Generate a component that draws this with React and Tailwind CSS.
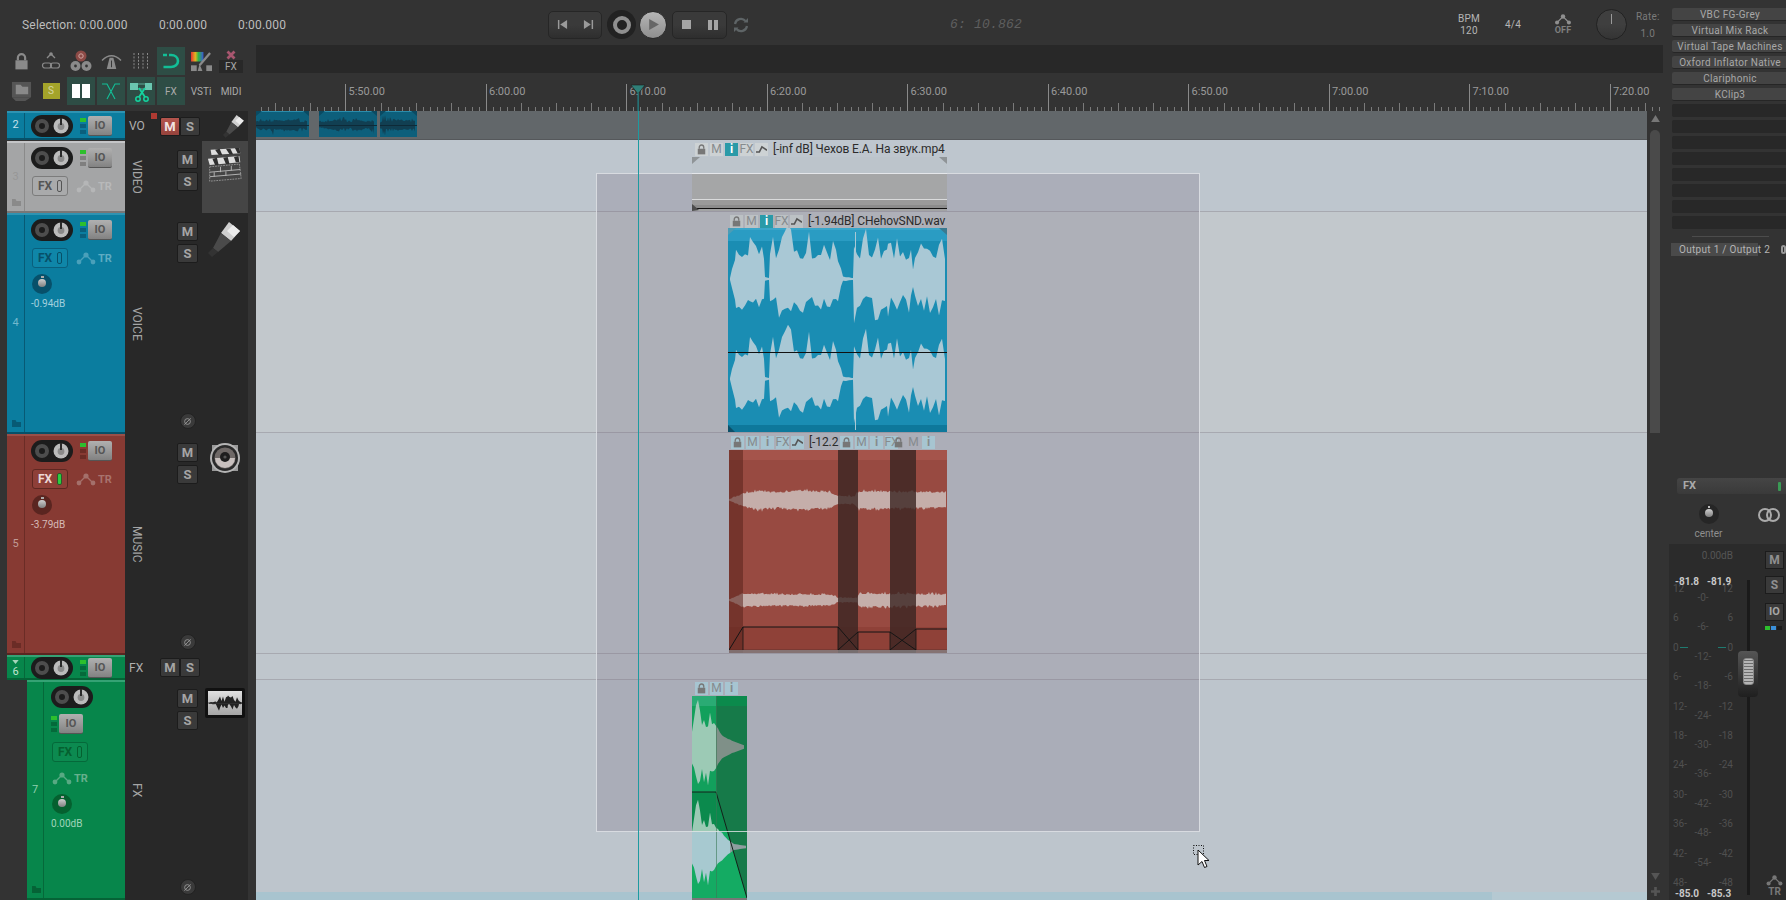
import React from 'react';

// small seeded generator so the waveforms stay the same on every render
const makeRand = (seed) => {
  let s = seed;
  return () => {
    s = (s * 16807) % 2147483647;
    return s / 2147483647;
  };
};

// env is a list of [x, base, peak]; spikes are held for `step` pixels
const wavePath = (env, cy, seed, lower = 1, step = 2, power = 2) => {
  const rand = makeRand(seed);
  const top = [];
  const bottom = [];
  let lf = 1;
  for (let i = 0; i < env.length - 1; i++) {
    const [x0, b0, p0] = env[i];
    const [x1, b1, p1] = env[i + 1];
    for (let x = x0; x < x1; x += step) {
      const t = (x - x0) / (x1 - x0);
      const base = b0 + (b1 - b0) * t;
      const peak = p0 + (p1 - p0) * t;
      if (rand() < 0.25) lf = 0.45 + rand() * 0.55;
      const a = base + Math.pow(rand(), power) * (peak - base) * lf;
      const b = base + Math.pow(rand(), power) * (peak - base) * lf;
      top.push(`${x},${(cy - a).toFixed(1)}`);
      bottom.unshift(`${x},${(cy + b * lower).toFixed(1)}`);
    }
  }
  return 'M' + top.concat(bottom).join(' L') + ' Z';
};

const VOICE_ENV = [
  [2, 1, 1], [4, 8, 14], [8, 18, 54], [22, 20, 60], [36, 16, 38], [37, 2, 2], [41, 1, 1],
  [42, 20, 62], [60, 20, 58], [90, 20, 58], [110, 16, 40], [115, 2, 4], [125, 1, 1],
  [126, 20, 60], [160, 20, 58], [183, 18, 50], [185, 9, 12], [187, 18, 58], [219, 20, 60],
];
const MUSIC_UP = [[0, 0.5, 1], [14, 6, 9], [30, 8, 13], [50, 7, 10], [70, 9, 13], [100, 7, 10], [109, 4, 5], [125, 3, 6], [130, 8, 13], [218, 7, 11]];
const MUSIC_DN = [[0, 0.5, 1], [14, 6, 8], [50, 5, 8], [100, 5, 7], [109, 2, 4], [128, 2, 3], [130, 6, 10], [218, 5, 8]];
const FX_UP = [[0, 14, 34], [6, 20, 50], [20, 18, 50], [24, 20, 24], [30, 11, 12], [40, 6, 7], [54, 1, 1]];
const FX_DN = [[0, 14, 34], [6, 20, 50], [20, 18, 50], [24, 18, 22], [36, 7, 8], [42, 3, 3], [55, 1, 1]];

const Lock = ({ className = 'w-[11px] h-[13px]', fill = '#777' }) => (
  <svg viewBox="0 0 12 14" className={className}>
    <path d="M3 6V4a3 3 0 0 1 6 0v2" fill="none" stroke={fill} strokeWidth="1.8" />
    <rect x="1" y="6" width="10" height="7.5" fill={fill} />
  </svg>
);

const ItemEnv = () => (
  <svg viewBox="0 0 13 9" className="w-[11px] h-[8px]">
    <path d="M0 8 L4 8 L7 2 L13 6" fill="none" stroke="#555" strokeWidth="1.8" />
  </svg>
);

const Cell = ({ bg, children, className = '' }) => (
  <div className={`w-[13px] h-[13px] flex items-center justify-center shrink-0 text-[12px] leading-none text-[#868b8e] ${bg} ${className}`}>
    {children}
  </div>
);

const ItemCells = ({ bg, active = 'bg-[#2a9aa8] text-white', noInfoFill, fx = true }) => (
  <>
    <Cell bg={bg}><Lock className="w-[9px] h-[11px]" /></Cell>
    <Cell bg={bg}>M</Cell>
    <Cell bg={noInfoFill ? bg : active} className="font-bold">i</Cell>
    {fx && <Cell bg={bg} className="text-[10px]">FX</Cell>}
    {fx && <Cell bg={bg}><ItemEnv /></Cell>}
  </>
);

const ItemHeader = ({ left, top, children }) => (
  <div className="absolute flex items-center gap-[2px] h-[14px] z-10" style={{ left, top }}>
    {children}
  </div>
);

const ItemTitle = ({ children, w }) => (
  <span className="ml-[3px] text-[12px] tracking-[-0.1px] leading-none whitespace-nowrap text-[#2b2b2b]" style={{ width: w }}>
    {children}
  </span>
);

function VideoItem() {
  return (
    <div className="absolute left-[436px] top-[46px] w-[255px] h-[54px] bg-[#a2a3a4] overflow-hidden z-10">
      <div className="h-[16px] bg-[#bcc4cb]" />
      <div className="h-[1px] bg-[#e4e6e8]" />
      <div className="h-[25px] bg-[#a5a6a7]" />
      <div className="h-[1px] bg-[#dadbdc]" />
      <div className="h-[5px] bg-[#9a9a9a]" />
      <div className="h-[3px] bg-[#8c8c8c]" />
      <div className="h-[1px] bg-[#111]" />
      <svg viewBox="0 0 255 54" className="absolute inset-0 w-full h-full">
        <path d="M0 0H8L0 7Z" fill="#8f9497" />
        <path d="M255 0H247L255 7Z" fill="#8f9497" />
        <path d="M0 54V47L7 53Z" fill="#4c4c4c" />
      </svg>
    </div>
  );
}

function VoiceItem() {
  return (
    <div className="absolute left-[472px] top-[117px] w-[219px] h-[204px] bg-[#1a8db3] overflow-hidden z-10">
      <svg viewBox="0 0 219 204" className="w-full h-full block">
        <rect width="219" height="2" fill="#3aa6ca" />
        <rect y="2" width="219" height="11" fill="#2a9cc3" />
        <rect y="197" width="219" height="7" fill="#0e789b" />
        <path d="M0 0H8L0 7Z" fill="#4d9cb5" />
        <path d="M219 0H211L219 7Z" fill="#3a7a90" />
        <path d="M0 204V197L7 204Z" fill="#0b4f68" />
        <path d={wavePath(VOICE_ENV, 51, 4711, 0.85, 3, 1.4)} fill="#a9c8d5" />
        <path d={wavePath(VOICE_ENV, 151, 4711, 0.85, 3, 1.4)} fill="#a9c8d5" />
        <rect x="127" y="4" width="1" height="44" fill="#a9c8d5" />
        <rect x="127" y="150" width="1" height="52" fill="#a9c8d5" />
        <rect y="124" width="219" height="1" fill="#111" />
      </svg>
    </div>
  );
}

function MusicItem() {
  return (
    <div className="absolute left-[473px] top-[339px] w-[218px] h-[203px] bg-[#984a41] overflow-hidden z-10">
      <svg viewBox="0 0 218 203" className="w-full h-full block">
        <rect width="218" height="10" fill="#a5544b" />
        <rect y="177" width="218" height="22" fill="#8f4138" />
        <rect y="199" width="218" height="4" fill="#7a3a33" />
        <path d={wavePath(MUSIC_UP, 50, 991, 1, 1)} fill="#c5aeaa" />
        <path d={wavePath(MUSIC_DN, 150, 1237, 1, 1)} fill="#c5aeaa" />
        <rect x="0" width="14" height="203" fill="#5a221c" fillOpacity="0.55" />
        <rect x="109" width="20" height="203" fill="#3a2422" fillOpacity="0.8" />
        <rect x="161" width="26" height="203" fill="#3a2422" fillOpacity="0.8" />
        <path d="M0 200L14 177H109L129 200M109 200L129 182H161L187 200M161 200L187 179H218" fill="none" stroke="#151515" strokeWidth="1" />
        <path d="M14 177V200M109 177V200M129 182V200M161 182V200M187 179V200" stroke="#151515" strokeWidth="0.8" />
        <rect y="200" width="218" height="3" fill="#8a8c8f" fillOpacity="0.7" />
      </svg>
    </div>
  );
}

function FxItem() {
  return (
    <div className="absolute left-[436px] top-[585px] w-[55px] h-[204px] overflow-hidden z-10 bg-[#14ab63]">
      <svg viewBox="0 0 55 204" className="w-full h-full block">
        <defs>
          <clipPath id="fx-left"><rect width="24" height="100" /></clipPath>
          <clipPath id="fx-right"><rect x="24" width="31" height="100" /></clipPath>
          <clipPath id="fx-mid"><rect y="100" width="55" height="36" /></clipPath>
          <clipPath id="fx-low"><rect y="136" width="38" height="68" /></clipPath>
          <clipPath id="fx-tail"><rect x="38" y="136" width="17" height="68" /></clipPath>
        </defs>
        <rect width="24" height="96" fill="#12a05c" />
        <rect width="24" height="10" fill="#2aab74" />
        <rect y="96" width="55" height="40" fill="#0b8a4d" />
        <path d="M24 0H55V202L24 96Z" fill="#167a49" />
        <rect x="24" width="31" height="10" fill="#0b8a4c" />
        <path d={wavePath(FX_UP, 51, 77, 1, 2, 1.2)} fill="#9ccab5" clipPath="url(#fx-left)" />
        <path d={wavePath(FX_UP, 51, 77, 1, 2, 1.2)} fill="#7f9088" clipPath="url(#fx-right)" />
        <path d={wavePath(FX_DN, 151, 77, 1, 2, 1.2)} fill="#9ccab5" clipPath="url(#fx-mid)" />
        <path d={wavePath(FX_DN, 151, 77, 1, 2, 1.2)} fill="#a7c9d0" clipPath="url(#fx-low)" />
        <path d={wavePath(FX_DN, 151, 77, 1, 2, 1.2)} fill="#8f9ea0" clipPath="url(#fx-tail)" />
        <path d="M0 96H24L55 202" fill="none" stroke="#15201a" strokeWidth="1" />
        <rect x="24" width="0.6" height="204" fill="#3a7a58" />
        <rect y="202" width="55" height="2" fill="#777" />
      </svg>
    </div>
  );
}

function MiniClips() {
  const env = (seed, w) => {
    const pts = [];
    const r = makeRand(seed);
    for (let x = 0; x <= w; x += 4) pts.push([x, 2 + r() * 3, 5 + r() * 8]);
    return pts;
  };
  return (
    <>
      {[[0, 53, 31], [63, 58, 57], [124, 37, 91]].map(([left, w, seed]) => (
        <div key={left} className="absolute top-0 h-[26px] bg-[#0d5f7b] overflow-hidden z-10" style={{ left, width: w }}>
          <svg width={w} height="26" className="block">
            <rect width={w} height="1" fill="#2b8cab" />
            <path d={`M0 0H6L0 5ZM${w} 0H${w - 6}L${w} 5Z`} fill="#0a4a62" />
            <path d={wavePath(env(seed, w), 14, seed * 37, 1, 1)} fill="#113f52" />
            <rect y="14" width={w} height="1" fill="#0e2a38" />
          </svg>
        </div>
      ))}
    </>
  );
}

function Cursor() {
  return (
    <div className="absolute left-[937px] top-[734px] z-30">
      <svg width="24" height="30" viewBox="0 0 24 30" className="block">
        <rect x="0.5" y="0.5" width="10" height="9" fill="none" stroke="#111" strokeDasharray="1 1.5" />
        <path d="M5 5V20L9 16.5L11.5 22.5L14 21.5L11.5 15.5H16Z" fill="#fff" stroke="#111" strokeWidth="1" />
      </svg>
    </div>
  );
}

function Arrange() {
  return (
    <div className="relative flex-1 bg-[#bfc6cd] flex flex-col overflow-hidden">
      <div className="h-[29px] bg-[#62676a] border-b border-[#55585b]" />
      <div className="h-[72px] bg-[#bec6ce] border-b border-[#a7a9b0]" />
      <div className="h-[221px] bg-[#c2c8cc] border-b border-[#a7a9b0]" />
      <div className="h-[221px] bg-[#bfc6cc] border-b border-[#a7a9b0]" />
      <div className="h-[26px] bg-[#bfc6cc] border-b border-[#a7a9b0]" />
      <div className="flex-1 bg-[#bdc5cc]" />

      {/* time selection lies under the items, its outline over them */}
      <div className="absolute left-[340px] top-[62px] w-[604px] h-[659px] bg-[#75697a]/25" />
      <div className="absolute left-[340px] top-[62px] w-[604px] h-[659px] border border-[#e3e6ea]/80 z-20 pointer-events-none" />

      <div className="absolute left-0 right-[155px] bottom-0 h-[8px] bg-[#a8c4cf]" />
      <div className="absolute left-[1236px] right-0 bottom-0 h-[8px] bg-[#b5c9d2]" />

      <MiniClips />

      <ItemHeader left={439} top={31}>
        <ItemCells bg="bg-[#cdd2d4]" />
        <ItemTitle>[-inf dB] Чехов Е.А. На звук.mp4</ItemTitle>
      </ItemHeader>
      <VideoItem />

      <ItemHeader left={474} top={103}>
        <ItemCells bg="bg-[#bcc1c4]" />
        <ItemTitle>[-1.94dB] CHehovSND.wav</ItemTitle>
      </ItemHeader>
      <VoiceItem />

      <ItemHeader left={475} top={324}>
        <ItemCells bg="bg-[#a7c5d1]" noInfoFill />
        <ItemTitle w={29}>[-12.2</ItemTitle>
        <ItemCells bg="bg-[#a7c5d1]" noInfoFill fx={false} />
        <Cell bg="bg-[#a7c5d1]" className="text-[10px]">FX</Cell>
      </ItemHeader>
      <ItemHeader left={636} top={324}>
        <Cell bg="bg-transparent"><Lock className="w-[9px] h-[11px]" /></Cell>
        <Cell bg="bg-transparent">M</Cell>
        <Cell bg="bg-[#a7c5d1]" className="font-bold">i</Cell>
      </ItemHeader>
      <MusicItem />

      <ItemHeader left={439} top={570}>
        <ItemCells bg="bg-[#a7c5d1]" noInfoFill fx={false} />
      </ItemHeader>
      <FxItem />

      <div className="absolute left-[382px] top-0 bottom-0 w-[1px] bg-[#1d9aa0] z-20" />
      <Cursor />
    </div>
  );
}

function Ruler() {
  const ticks = [];
  for (let i = -12; i < 190; i++) {
    const x = 89.4 + 7.025 * i;
    if (x > 1404) break;
    const major = i % 20 === 0;
    const medium = i % 5 === 0;
    ticks.push({ x: Math.round(x) + 0.5, y: major ? 11 : medium ? 30 : 34, major });
  }
  const labels = ['5:50.00', '6:00.00', '6:10.00', '6:20.00', '6:30.00', '6:40.00', '6:50.00', '7:00.00', '7:10.00', '7:20.00'];
  return (
    <div className="relative h-[38px] bg-[#333] overflow-hidden">
      <svg width="1407" height="38" className="absolute inset-0">
        {ticks.map((t) => (
          <line key={t.x} x1={t.x} x2={t.x} y1={t.y} y2="38" stroke={t.major ? '#8a8a8a' : '#7a7a7a'} />
        ))}
      </svg>
      {labels.map((l, i) => (
        <span key={l} className="absolute top-[12px] text-[11px] leading-[14px] text-[#999]" style={{ left: 92.5 + 140.5 * i }}>{l}</span>
      ))}
      <svg width="16" height="38" className="absolute left-[374px] top-0">
        <path d="M1 12H15L8 21Z" fill="#2f7f78" stroke="#1c1c1c" strokeWidth="0.6" />
        <rect x="7.6" y="20" width="1" height="18" fill="#1d9aa0" />
      </svg>
    </div>
  );
}

function GroupBtn({ children }) {
  return (
    <div className="w-[27px] h-full flex items-center justify-center">{children}</div>
  );
}

function Transport() {
  return (
    <div className="flex items-center">
      <div className="w-[54px] h-[28px] flex rounded-[5px] border border-[#262626] bg-gradient-to-b from-[#3a3a3a] via-[#3a3a3a] to-[#2e2e2e]">
        <GroupBtn>
          <svg viewBox="0 0 12 12" className="w-[11px] h-[11px]"><path d="M1 1H2.6V11H1ZM11 1V11L3.5 6Z" fill="#9a9a9a" /></svg>
        </GroupBtn>
        <GroupBtn>
          <svg viewBox="0 0 12 12" className="w-[11px] h-[11px]"><path d="M1 1V11L8.5 6ZM9.4 1H11V11H9.4Z" fill="#9a9a9a" /></svg>
        </GroupBtn>
      </div>
      <div className="ml-[5px] w-[29px] h-[29px] rounded-full bg-[#222] flex items-center justify-center">
        <div className="w-[18px] h-[18px] rounded-full border-[4px] border-[#8f8f8f]" />
      </div>
      <div className="ml-[3px] w-[28px] h-[28px] rounded-full bg-gradient-to-b from-[#b5b5b5] to-[#8f8f8f] flex items-center justify-center border border-[#2a2a2a]">
        <svg viewBox="0 0 12 12" className="w-[13px] h-[13px]"><path d="M2 1V11L11 6Z" fill="#666" /></svg>
      </div>
      <div className="ml-[5px] w-[55px] h-[28px] flex rounded-[5px] border border-[#262626] bg-gradient-to-b from-[#3a3a3a] via-[#3a3a3a] to-[#2e2e2e]">
        <GroupBtn><div className="w-[9px] h-[9px] bg-[#a5a5a5]" /></GroupBtn>
        <GroupBtn>
          <div className="flex gap-[2px]"><div className="w-[4px] h-[10px] bg-[#a5a5a5]" /><div className="w-[4px] h-[10px] bg-[#a5a5a5]" /></div>
        </GroupBtn>
      </div>
      <svg viewBox="0 0 18 18" className="ml-[5px] w-[18px] h-[18px]">
        <path d="M3 8a6 6 0 0 1 10.5-3M15 10a6 6 0 0 1-10.5 3" fill="none" stroke="#5e6466" strokeWidth="2.2" />
        <path d="M11.5 6.5H16V2ZM6.5 11.5H2V16Z" fill="#5e6466" />
      </svg>
    </div>
  );
}

function EnvDots({ color = '#8f8f8f', className = 'w-[20px] h-[13px]' }) {
  return (
    <svg viewBox="0 0 20 13" className={className}>
      <path d="M3 10L10 3L17 10" fill="none" stroke={color} strokeWidth="1.4" />
      <circle cx="3" cy="10" r="2.4" fill={color} />
      <circle cx="10" cy="3" r="2.6" fill={color} />
      <circle cx="17" cy="10" r="2.4" fill={color} />
    </svg>
  );
}

function TopBar() {
  return (
    <div className="h-[45px] pt-[4px] relative flex items-center bg-[#333] text-[#bdbdbd] text-[12px] tracking-[0.2px]">
      <span className="ml-[22px] w-[137px]">Selection: 0:00.000</span>
      <span className="w-[79px]">0:00.000</span>
      <span className="w-[310px]">0:00.000</span>
      <Transport />
      <span className="ml-[200px] w-[80px] italic font-['Liberation_Mono',monospace] text-[13px] tracking-[0.2px] text-[#5f5f5f] whitespace-pre">6: 10.862</span>
      <div className="ml-[428px] w-[22px] flex flex-col items-center text-[10px] leading-[12px] text-[#b5b5b5]">
        <span>BPM</span>
        <span>120</span>
      </div>
      <span className="ml-[25px] text-[10px] text-[#b5b5b5]">4/4</span>
      <div className="ml-[33px] flex flex-col items-center">
        <EnvDots className="w-[18px] h-[11px]" />
        <span className="text-[9px] leading-[10px] font-bold text-[#7f7f7f]">OFF</span>
      </div>
      <div className="ml-[24px] relative w-[31px] h-[31px] rounded-full border border-[#222] bg-gradient-to-b from-[#3f3f3f] via-[#3f3f3f] to-[#343434] flex justify-center pt-[4px]">
        <div className="w-[1px] h-[10px] bg-[#9a9a9a]" />
      </div>
      <div className="ml-[9px] flex flex-col items-center text-[10px] leading-[17px] text-[#7a7a7a]">
        <span>Rate:</span>
        <span>1.0</span>
      </div>
    </div>
  );
}

function ToolCell({ active, children }) {
  return (
    <div className={`w-[28px] h-[28px] mr-[2px] flex items-center justify-center text-[10px] text-[#aaa] ${active ? 'bg-[#2e4d45]' : ''}`}>
      {children}
    </div>
  );
}

function Toolbar() {
  const g = '#8a8a8a';
  return (
    <div className="w-[256px] shrink-0 pl-[7px] pt-[2px] bg-[#333] grid grid-cols-[repeat(8,30px)] gap-y-[2px] content-start">
      <ToolCell><Lock className="w-[15px] h-[17px]" fill={g} /></ToolCell>
      <ToolCell>
        <svg viewBox="0 0 20 20" className="w-[20px] h-[20px]">
          <path d="M6 7L10 3L14 7" fill="none" stroke={g} strokeWidth="1.3" />
          <circle cx="10" cy="3" r="1.8" fill={g} />
          <rect x="1.5" y="12" width="9" height="5" rx="2.5" fill="none" stroke={g} strokeWidth="1.2" />
          <rect x="9.5" y="12" width="9" height="5" rx="2.5" fill="none" stroke={g} strokeWidth="1.2" />
        </svg>
      </ToolCell>
      <ToolCell>
        <svg viewBox="0 0 22 22" className="w-[22px] h-[22px]">
          <circle cx="11" cy="6" r="5.5" fill="#8c4a46" />
          <circle cx="11" cy="6" r="2.2" fill="none" stroke="#cfa5a2" strokeWidth="1" />
          <circle cx="5.5" cy="16" r="5" fill={g} />
          <circle cx="16.5" cy="16" r="5" fill={g} />
          <circle cx="5.5" cy="16" r="1.4" fill="#333" />
          <circle cx="16.5" cy="16" r="1.4" fill="#333" />
        </svg>
      </ToolCell>
      <ToolCell>
        <svg viewBox="0 0 22 20" className="w-[21px] h-[19px]">
          <path d="M1 9Q11 -1 21 9" fill="none" stroke={g} strokeWidth="1.5" />
          <path d="M9 6H13L16 18H6Z" fill={g} />
          <rect x="10.5" y="9" width="1" height="7" fill="#333" />
        </svg>
      </ToolCell>
      <ToolCell>
        <svg viewBox="0 0 18 18" className="w-[18px] h-[18px]">
          <path d="M2 1V17M6.5 1V17M11 1V17M15.5 1V17" stroke={g} strokeWidth="1" strokeDasharray="2 1.4" />
        </svg>
      </ToolCell>
      <ToolCell active>
        <svg viewBox="0 0 18 18" className="w-[18px] h-[18px]">
          <path d="M1 3H9C13 3 16 5.5 16 9S13 15 9 15H1" fill="none" stroke="#12bf97" strokeWidth="2.6" strokeDasharray="4 2 30" />
        </svg>
      </ToolCell>
      <ToolCell>
        <svg viewBox="0 0 24 22" className="w-[23px] h-[21px]">
          <defs>
            <linearGradient id="rb" x1="0" x2="1" y1="0" y2="0">
              <stop offset="0" stopColor="#e53232" />
              <stop offset="0.35" stopColor="#e2b51f" />
              <stop offset="0.6" stopColor="#2fb54a" />
              <stop offset="1" stopColor="#3a58d8" />
            </linearGradient>
          </defs>
          <rect x="1" y="1" width="13" height="10" fill="url(#rb)" />
          <rect x="1" y="15" width="6" height="6" fill={g} />
          <rect x="17" y="15" width="6" height="6" fill={g} />
          <path d="M21 2L10 15" stroke={g} strokeWidth="2.4" />
          <path d="M10 14L8 21H13Z" fill={g} />
        </svg>
      </ToolCell>
      <ToolCell>
        <div className="flex flex-col items-center">
          <svg viewBox="0 0 10 10" className="w-[10px] h-[10px]"><path d="M1.5 1.5L8.5 8.5M8.5 1.5L1.5 8.5" stroke="#a8566f" strokeWidth="2.8" /></svg>
          <span className="w-[24px] h-[13px] bg-[#282828] text-center text-[10px] leading-[13px] text-[#a5a5a5]">FX</span>
        </div>
      </ToolCell>

      <ToolCell>
        <svg viewBox="0 0 22 22" className="w-[21px] h-[21px]">
          <rect x="1" y="1" width="20" height="16" fill="#555" />
          <path d="M5 4H10L12 6H18V14H5Z" fill="#8a8a8a" />
          <path d="M1 17H21L15 21H5Z" fill="#555" />
        </svg>
      </ToolCell>
      <ToolCell>
        <div className="w-[17px] h-[16px] bg-[#a4a42a] text-center text-[10px] leading-[16px] text-[#d5d5a5]">S</div>
      </ToolCell>
      <ToolCell active>
        <div className="flex gap-[2px]"><div className="w-[8px] h-[14px] bg-white" /><div className="w-[8px] h-[14px] bg-white" /></div>
      </ToolCell>
      <ToolCell active>
        <svg viewBox="0 0 20 18" className="w-[20px] h-[18px]">
          <path d="M1 2H6L14 17M19 2H14L6 17" fill="none" stroke="#12bf97" strokeWidth="1.1" />
        </svg>
      </ToolCell>
      <ToolCell active>
        <svg viewBox="0 0 24 22" className="w-[24px] h-[22px]">
          <rect x="1" y="3" width="8" height="7" fill="#6ac6b0" />
          <rect x="16" y="3" width="7" height="7" fill="#6ac6b0" />
          <path d="M9 4H16M9 9H16" stroke="#6ac6b0" strokeWidth="0.8" />
          <path d="M10 8L16 17M16 8L10 17" stroke="#14d39f" strokeWidth="1.8" />
          <circle cx="9" cy="19" r="2.2" fill="none" stroke="#14d39f" strokeWidth="1.5" />
          <circle cx="17" cy="19" r="2.2" fill="none" stroke="#14d39f" strokeWidth="1.5" />
        </svg>
      </ToolCell>
      <ToolCell active>FX</ToolCell>
      <ToolCell>VSTi</ToolCell>
      <ToolCell>MIDI</ToolCell>
    </div>
  );
}

const THEMES = {
  blue: { panel: 'bg-[#0b7d9f] border-t-[#2e93b2] border-b-[#075068]', line: 'border-[#075a75]', num: 'text-[#72b8cd]', led: 'bg-[#0a5f7c]', fx: 'border-[#0a5f7c] text-[#075068] bg-[#0f86a8]', tr: '#4aa0ba', trText: 'text-[#5eacc3]', knob: 'bg-[#07506a]', db: 'text-[#a3d0de]', folder: '#075a75' },
  grey: { panel: 'bg-[#a4a5a6] border-t-[#c4c5c7] border-b-[#777]', line: 'border-[#8a8a8a]', num: 'text-[#979797]', led: 'bg-[#7f7f7f]', fx: 'border-[#7c7c7c] text-[#555] bg-[#a9aaab]', tr: '#b5b6b7', trText: 'text-[#b8b9ba]', knob: 'bg-[#777]', db: 'text-[#555]', folder: '#8a8a8a' },
  red: { panel: 'bg-[#873a33] border-t-[#9a4f48] border-b-[#5a2520]', line: 'border-[#6b2c26]', num: 'text-[#c09a96]', led: 'bg-[#6b2c26]', fx: 'border-[#5e2721] text-[#ecd8d6] bg-[#8e3f38]', tr: '#a4706b', trText: 'text-[#a8736e]', knob: 'bg-[#5a2520]', db: 'text-[#d6bbb8]', folder: '#6b2c26' },
  green: { panel: 'bg-[#07864b] border-t-[#35a274] border-b-[#056336]', line: 'border-[#05693a]', num: 'text-[#8fcfae]', led: 'bg-[#05693a]', fx: 'border-[#05693a] text-[#05602f] bg-[#0c8a50]', tr: '#58a983', trText: 'text-[#66b08d]', knob: 'bg-[#05602f]', db: 'text-[#a0d5ba]', folder: '#056336' },
};

function Pill() {
  return (
    <div className="w-[42px] h-[22px] shrink-0 rounded-full bg-[#1c1c1c] flex items-center justify-between px-[4px]">
      <div className="w-[14px] h-[14px] rounded-full border-[4px] border-[#4d4d4d]" />
      <svg viewBox="0 0 16 16" className="w-[16px] h-[16px]">
        <circle cx="8" cy="8" r="7.5" fill="#bbb" />
        <circle cx="8" cy="8.5" r="3.4" fill="#8a8a8a" />
        <rect x="7" y="0" width="2" height="7" fill="#2a2a2a" />
      </svg>
    </div>
  );
}

function Leds({ theme }) {
  return (
    <div className="w-[6px] flex flex-col gap-[2px] shrink-0">
      <div className="h-[4px] bg-[#2dbf2d]" />
      <div className={`h-[4px] ${theme.led}`} />
      <div className={`h-[4px] ${theme.led}`} />
    </div>
  );
}

function IoBtn() {
  return (
    <div className="w-[24px] h-[20px] shrink-0 rounded-[2px] bg-gradient-to-b from-[#b0b0b0] via-[#9a9a9a] to-[#828282] border-b border-[#555] text-center text-[11px] leading-[19px] font-bold text-[#555]">
      IO
    </div>
  );
}

function FxBtn({ theme, on }) {
  return (
    <div className={`w-[36px] h-[20px] shrink-0 rounded-[3px] border flex items-center justify-center gap-[5px] text-[12px] font-bold ${theme.fx}`}>
      <span>FX</span>
      <div className={`w-[5px] h-[12px] rounded-[2px] border ${on ? 'bg-[#2ecc40] border-[#2a5a2a]' : 'border-current'}`} />
    </div>
  );
}

function Tr({ theme }) {
  return (
    <div className="flex items-center gap-[2px]">
      <EnvDots color={theme.tr} />
      <span className={`text-[11px] font-bold leading-none ${theme.trText}`}>TR</span>
    </div>
  );
}

function VolKnob({ theme }) {
  return (
    <div className={`w-[20px] h-[20px] rounded-full flex flex-col items-center pt-[2px] ${theme.knob}`}>
      <div className="w-[3px] h-[2px] bg-[#aaa] mb-[1px]" />
      <div className="w-[8px] h-[8px] rounded-full bg-gradient-to-b from-[#cfcfcf] to-[#808080]" />
    </div>
  );
}

function Folder({ color, left = 'left-[5px]' }) {
  return (
    <svg viewBox="0 0 9 7" className={`absolute bottom-[5px] ${left} w-[9px] h-[7px]`}>
      <path d="M0 0H3.5L4.5 2H9V7H0Z" fill={color} />
    </svg>
  );
}

function Panel({ theme, number, children, folder }) {
  return (
    <div className={`relative w-[118px] h-full shrink-0 flex border-t-2 border-b-2 ${theme.panel}`}>
      <div className={`w-[18px] shrink-0 border-r flex items-center justify-center text-[11px] ${theme.line} ${theme.num}`}>
        {number}
      </div>
      <div className="pl-[6px] pt-[4px]">{children}</div>
      {folder && <Folder color={theme.folder} />}
    </div>
  );
}

function Controls({ theme, fxOn, db }) {
  return (
    <>
      <div className="flex items-center">
        <Pill />
        <div className="ml-[7px]"><Leds theme={theme} /></div>
        <div className="ml-[2px]"><IoBtn /></div>
      </div>
      <div className="mt-[7px] ml-[1px] flex items-center gap-[8px]">
        <FxBtn theme={theme} on={fxOn} />
        <Tr theme={theme} />
      </div>
      {db && (
        <>
          <div className="mt-[6px] ml-[1px]"><VolKnob theme={theme} /></div>
          <div className={`mt-[3px] text-[10px] leading-[14px] ${theme.db}`}>{db}</div>
        </>
      )}
    </>
  );
}

const MsBtn = ({ children, active, className = 'w-[21px]' }) => (
  <div className={`h-[19px] text-center text-[13px] leading-[17px] font-bold border border-[#1c1c1c] rounded-[2px] ${className} ${active ? 'bg-gradient-to-b from-[#b5554d] to-[#96433c] text-[#f2e4e2]' : 'bg-[#3a3a3a] text-[#a5a5a5]'}`}>
    {children}
  </div>
);

function Phase() {
  return (
    <div className="mt-auto mb-[5px] w-[16px] h-[16px] rounded-full bg-[#3a3a3a] border border-[#222] flex items-center justify-center">
      <svg viewBox="0 0 10 10" className="w-[9px] h-[9px]">
        <circle cx="5" cy="5" r="3.2" fill="none" stroke="#999" strokeWidth="1" />
        <path d="M1.5 8.5L8.5 1.5" stroke="#999" strokeWidth="1" />
      </svg>
    </div>
  );
}

const MicIcon = ({ className }) => (
  <svg viewBox="0 0 36 40" className={className}>
    <path d="M22 3L33 12L24 22L14 14Z" fill="#cfcfcf" />
    <path d="M26 6L33 12L27 18L20 12Z" fill="#ececec" />
    <path d="M14 14L24 22L11 33L6 29Z" fill="#4a4a4a" />
    <path d="M6 29L11 33L5 38L1 34Z" fill="#333" />
  </svg>
);

const ClapIcon = () => (
  <svg viewBox="0 0 40 40" className="w-[36px] h-[36px]">
    <path d="M4 3L36 1L37 7L5 9Z" fill="#ddd" />
    <path d="M9 3L13 9H17L14 2ZM21 2L25 8H29L26 2ZM31 1L34 7H37L36 1Z" fill="#2e2e2e" />
    <path d="M1 13L36 10L37 17L3 20Z" fill="#ddd" />
    <path d="M6 13L9 20H13L11 12ZM18 12L21 19H25L23 11ZM30 11L32 17H36L35 10Z" fill="#2e2e2e" />
    <path d="M3 22L36 19L38 35L3 38Z" fill="none" stroke="#aaa" strokeWidth="0.8" strokeDasharray="2 1" />
    <path d="M3 28L37 25M3 33L38 30M15 22V28M27 21V26M8 28V33M21 27V32" stroke="#bbb" strokeWidth="1" />
  </svg>
);

const SpeakerIcon = () => (
  <svg viewBox="0 0 32 32" className="w-[32px] h-[32px]">
    <path d="M3 3H10L3 10ZM29 3H22L29 10ZM3 29H10L3 22ZM29 29H22L29 22Z" fill="#999" />
    <circle cx="16" cy="16" r="15" fill="#b5b5b5" />
    <circle cx="16" cy="16" r="13" fill="#2a2a2a" />
    <circle cx="16" cy="16" r="10.5" fill="#6f6967" />
    <path d="M6 16A10 10 0 0 0 26 16Z" fill="#c8c0be" />
    <circle cx="16" cy="15" r="5" fill="#1e1e1e" />
    <circle cx="16" cy="15" r="1.6" fill="#555" />
  </svg>
);

const ThumbIcon = () => {
  const env = [[2, 0.3, 0.5], [10, 0.5, 2], [14, 1, 14], [22, 1, 16], [28, 1, 12], [33, 0.5, 3], [38, 0.3, 0.5]];
  return (
    <div className="w-[40px] h-[30px] border-[3px] border-[#111] rounded-[2px] bg-gradient-to-b from-[#e0e0e0] to-[#a5a5a5]">
      <svg viewBox="0 0 34 24" className="w-full h-full block">
        <path d={wavePath(env, 12, 515, 1, 1.5, 0.9)} fill="#222" transform="translate(-2 0)" />
        <rect x="1" y="12" width="32" height="0.8" fill="#333" />
      </svg>
    </div>
  );
};

function NameCol({ label, phase, children, imgClass = '' }) {
  return (
    <div className="w-[123px] h-full shrink-0 bg-[#282828] flex">
      <div className="w-[52px] pl-[5px] flex items-center">
        <span className="[writing-mode:vertical-rl] text-[12px] leading-[14px] text-[#a5a5a5]">{label}</span>
      </div>
      <div className="w-[21px] pt-[9px] flex flex-col items-center gap-[3px]">
        <MsBtn>M</MsBtn>
        <MsBtn>S</MsBtn>
        {phase && <Phase />}
      </div>
      <div className={`w-[46px] ml-[4px] flex justify-center ${imgClass}`}>{children}</div>
    </div>
  );
}

function SlimName({ label, mActive, badge, children }) {
  return (
    <div className="relative w-[123px] h-full shrink-0 bg-[#282828] flex items-center">
      <span className="w-[35px] pl-[4px] text-[12px] text-[#b0b0b0]">{label}</span>
      <MsBtn active={mActive} className="w-[20px] rounded-r-none">M</MsBtn>
      <MsBtn className="w-[20px] rounded-l-none">S</MsBtn>
      {badge && <div className="absolute left-[26px] top-[2px] w-[6px] h-[6px] bg-[#b03a32]" />}
      <div className="ml-[21px]">{children}</div>
    </div>
  );
}

function TrackList() {
  return (
    <div className="w-[256px] shrink-0 bg-[#333] pr-[8px] flex flex-col">
      <div className="h-[30px] flex pl-[7px]">
        <div className={`relative w-[118px] h-[29px] flex border-t-2 border-b-2 ${THEMES.blue.panel}`}>
          <div className={`w-[18px] border-r flex items-center justify-center text-[11px] text-[#c5e2ec] ${THEMES.blue.line}`}>2</div>
          <div className="pl-[6px] flex items-center">
            <Pill />
            <div className="ml-[7px]"><Leds theme={THEMES.blue} /></div>
            <div className="ml-[2px]"><IoBtn /></div>
          </div>
        </div>
        <SlimName label="VO" mActive badge><MicIcon className="w-[26px] h-[26px]" /></SlimName>
      </div>

      <div className="h-[72px] flex pl-[7px]">
        <Panel theme={THEMES.grey} number="3" folder><Controls theme={THEMES.grey} /></Panel>
        <NameCol label="VIDEO" imgClass="bg-[#454545] items-start pt-[6px]"><ClapIcon /></NameCol>
      </div>

      <div className="h-[221px] flex pl-[7px]">
        <Panel theme={THEMES.blue} number="4" folder><Controls theme={THEMES.blue} db="-0.94dB" /></Panel>
        <NameCol label="VOICE" phase imgClass="items-start pt-[6px]"><MicIcon className="w-[36px] h-[40px]" /></NameCol>
      </div>

      <div className="h-[221px] flex pl-[7px]">
        <Panel theme={THEMES.red} number="5" folder><Controls theme={THEMES.red} fxOn db="-3.79dB" /></Panel>
        <NameCol label="MUSIC" phase imgClass="items-start pt-[8px]"><SpeakerIcon /></NameCol>
      </div>

      <div className="h-[25px] flex pl-[7px]">
        <div className={`relative w-[118px] h-full flex border-t-2 border-b-2 ${THEMES.green.panel}`}>
          <div className={`w-[18px] border-r flex flex-col items-center text-[11px] leading-[13px] text-[#bfe4d0] ${THEMES.green.line}`}>
            <svg viewBox="0 0 8 5" className="w-[7px] h-[4px] mt-[3px] mb-[1px]"><path d="M0 0H8L4 5Z" fill="#a5d5bb" /></svg>
            6
          </div>
          <div className="pl-[6px] flex items-center">
            <Pill />
            <div className="ml-[7px]"><Leds theme={THEMES.green} /></div>
            <div className="ml-[2px]"><IoBtn /></div>
          </div>
        </div>
        <SlimName label="FX" />
      </div>

      <div className="flex-1 flex pl-[27px]">
        <div className={`relative w-[98px] h-full flex border-t-2 border-b-2 ${THEMES.green.panel}`}>
          <div className={`w-[17px] shrink-0 border-r flex items-center justify-center text-[11px] ${THEMES.green.line} ${THEMES.green.num}`}>7</div>
          <div className="pl-[7px] pt-[4px] flex flex-col items-start">
            <Pill />
            <div className="mt-[6px] flex items-center gap-[2px]">
              <Leds theme={THEMES.green} />
              <IoBtn />
            </div>
            <div className="mt-[8px] ml-[1px]"><FxBtn theme={THEMES.green} /></div>
            <div className="mt-[10px] ml-[1px]"><Tr theme={THEMES.green} /></div>
            <div className="mt-[9px] ml-[1px]"><VolKnob theme={THEMES.green} /></div>
            <div className={`mt-[3px] text-[10px] leading-[14px] ${THEMES.green.db}`}>0.00dB</div>
          </div>
          <Folder color={THEMES.green.folder} />
        </div>
        <NameCol label="FX" phase imgClass="items-start pt-[8px]"><ThumbIcon /></NameCol>
      </div>
    </div>
  );
}

function Scrollbar() {
  return (
    <div className="relative w-[16px] shrink-0 bg-[#333] flex flex-col items-center">
      <svg viewBox="0 0 10 8" className="w-[9px] h-[7px] mt-[4px]"><path d="M0 8L5 0L10 8Z" fill="#777" /></svg>
      <div className="mt-[8px] w-[10px] h-[303px] rounded-t-[5px] bg-[#4a4a4a]" />
      <svg viewBox="0 0 10 8" className="w-[9px] h-[7px] mt-auto"><path d="M0 0L5 8L10 0Z" fill="#555" /></svg>
      <svg viewBox="0 0 10 10" className="w-[9px] h-[9px] mt-[7px] mb-[4px]"><path d="M3.5 0H6.5V3.5H10V6.5H6.5V10H3.5V6.5H0V3.5H3.5Z" fill="#555" /></svg>
    </div>
  );
}

const FX_SLOTS = ['VBC FG-Grey', 'Virtual Mix Rack', 'Virtual Tape Machines', 'Oxford Inflator Native', 'Clariphonic', 'KClip3', '', '', '', '', '', '', '', ''];

const SCALE = [
  ['12', '-0-', '12'], ['6', '-6-', '6'], ['0', '-12-', '0'], ['6-', '-18-', '-6'],
  ['12-', '-24-', '-12'], ['18-', '-30-', '-18'], ['24-', '-36-', '-24'], ['30-', '-42-', '-30'],
  ['36-', '-48-', '-36'], ['42-', '-54-', '-42'], ['48-', '', '-48'],
];

function Meter() {
  return (
    <div className="relative flex-1 min-h-0 overflow-hidden ml-[6px] bg-[#2b2b2b] flex">
      <div className="w-[69px] pl-[4px]">
        <div className="h-[24px] pr-[5px] text-right text-[10px] leading-[24px] text-[#555]">0.00dB</div>
        <div className="mt-[14px] w-[60px]">
          {SCALE.map(([l, c, r], i) => (
            <div key={i} className="h-[29.4px] last:h-[14px] grid grid-cols-[1fr_auto_1fr] text-[10px] leading-[14px] text-[#505050]">
              <span className={l === '0' ? 'flex items-center gap-[1px] h-[14px]' : ''}>
                {l}
                {l === '0' && <span className="w-[8px] h-[1px] bg-[#1f7a70]" />}
              </span>
              <span className="mt-[9px]">{c}</span>
              <span className={`text-right ${r === '0' ? 'flex items-center justify-end gap-[1px] h-[14px]' : ''}`}>
                {r === '0' && <span className="w-[8px] h-[1px] bg-[#1f7a70]" />}
                {r}
              </span>
            </div>
          ))}
        </div>
      </div>
      <div className="absolute left-[6px] top-[31px] text-[10px] leading-[14px] font-bold text-[#c8c8c8] flex gap-[8px]">
        <span>-81.8</span><span>-81.9</span>
      </div>
      <div className="absolute left-[6px] bottom-[1px] text-[10px] leading-[10px] font-bold text-[#c8c8c8] flex gap-[8px]">
        <span>-85.0</span><span>-85.3</span>
      </div>
      <div className="relative w-[20px] flex justify-center pt-[36px] pb-[5px]">
        <div className="w-[3px] h-full bg-[#1a1a1a]" />
        <div className="absolute left-0 top-[107px] w-[20px] h-[46px] rounded-[4px] bg-gradient-to-b from-[#555] via-[#3a3a3a] to-[#1f1f1f] flex justify-center pt-[7px]">
          <div className="w-[11px] h-[27px] rounded-[3px] bg-[repeating-linear-gradient(0deg,#b5b5b5_0px,#b5b5b5_2px,#6d6d6d_2px,#6d6d6d_3px)] border border-[#888]" />
        </div>
      </div>
      <div className="ml-[7px] flex-1 flex flex-col items-start pt-[7px]">
        <div className="w-[19px] h-[18px] bg-[#3a3a3a] border border-[#1c1c1c] text-center text-[12px] leading-[16px] font-bold text-[#909090]">M</div>
        <div className="mt-[7px] w-[19px] h-[18px] bg-[#3a3a3a] border border-[#1c1c1c] text-center text-[12px] leading-[16px] font-bold text-[#909090]">S</div>
        <div className="mt-[9px] w-[19px] h-[18px] bg-[#3a3a3a] border border-[#1c1c1c] text-center text-[11px] leading-[16px] font-bold text-[#a5a5a5]">IO</div>
        <div className="mt-[5px] flex gap-[1px]">
          <div className="w-[5px] h-[4px] bg-[#2dbf2d]" />
          <div className="w-[5px] h-[4px] bg-[#3a8fd8]" />
          <div className="w-[5px] h-[4px] bg-[#1a1a1a]" />
        </div>
        <div className="mt-auto mb-[2px] flex flex-col items-center w-[19px]">
          <EnvDots color="#777" className="w-[17px] h-[11px]" />
          <span className="text-[10px] leading-[12px] font-bold text-[#777]">TR</span>
        </div>
      </div>
    </div>
  );
}

function RightPanel() {
  return (
    <div className="w-[123px] shrink-0 h-full bg-[#333] flex flex-col overflow-hidden">
      <div className="pl-[9px] pt-[8px] flex flex-col gap-[3px]">
        {FX_SLOTS.map((name, i) => (
          <div key={i} className={`w-[116px] h-[13px] shrink-0 rounded-[2px] text-center text-[10px] leading-[13px] tracking-[0.3px] whitespace-nowrap text-[#a8a8a8] ${name ? 'bg-[#444] border-b border-[#262626]' : 'bg-[#282828]'}`}>
            {name}
          </div>
        ))}
      </div>
      <div className="ml-[29px] mt-[7px] w-[77px] h-[1px] bg-[#4c4c4c]" />
      <div className="mt-[6px] ml-[8px] flex items-center">
        <div className="w-[87px] h-[13px] bg-[#4a4a4a] text-[10px] leading-[13px] tracking-[0.3px] whitespace-nowrap pl-[8px] text-[#b5b5b5]">Output 1 / Output 2</div>
        <div className="ml-[23px] w-[9px] h-[9px] rounded-full border-2 border-[#999]" />
      </div>
      <div className="mt-[222px] ml-[14px] w-[115px] h-[16px] shrink-0 rounded-[3px] bg-gradient-to-b from-[#454545] to-[#3a3a3a] flex items-center pl-[6px] text-[11px] font-bold text-[#aaa]">
        FX
        <div className="ml-[82px] w-[3px] h-[9px] rounded-[1px] bg-[#3a9a55]" />
      </div>
      <div className="h-[50px] shrink-0 flex">
        <div className="w-[75px] pl-[16px] flex flex-col items-center pt-[10px]">
          <div className="w-[20px] h-[20px] rounded-full bg-[#262626] flex flex-col items-center pt-[2px]">
            <div className="w-[2px] h-[2px] bg-[#bbb] mb-[1px]" />
            <div className="w-[8px] h-[8px] rounded-full bg-gradient-to-b from-[#cfcfcf] to-[#808080]" />
          </div>
          <span className="mt-[3px] text-[10px] leading-[14px] text-[#8f8f8f]">center</span>
        </div>
        <div className="ml-[20px] mt-[14px] relative w-[22px] h-[14px]">
          <div className="absolute left-0 top-0 w-[14px] h-[14px] rounded-full border-2 border-[#aaa]" />
          <div className="absolute left-[8px] top-0 w-[14px] h-[14px] rounded-full border-2 border-[#aaa]" />
        </div>
      </div>
      <Meter />
    </div>
  );
}

export default function App() {
  return (
    <div className="w-[1786px] h-[900px] flex overflow-hidden bg-[#333] font-['Roboto',sans-serif]">
      <div className="w-[1663px] shrink-0 flex flex-col">
        <TopBar />
        <div className="h-[66px] shrink-0 flex">
          <Toolbar />
          <div className="flex-1 flex flex-col">
            <div className="h-[28px] bg-[#282828]" />
            <Ruler />
          </div>
        </div>
        <div className="flex-1 flex min-h-0">
          <TrackList />
          <Arrange />
          <Scrollbar />
        </div>
      </div>
      <RightPanel />
    </div>
  );
}
